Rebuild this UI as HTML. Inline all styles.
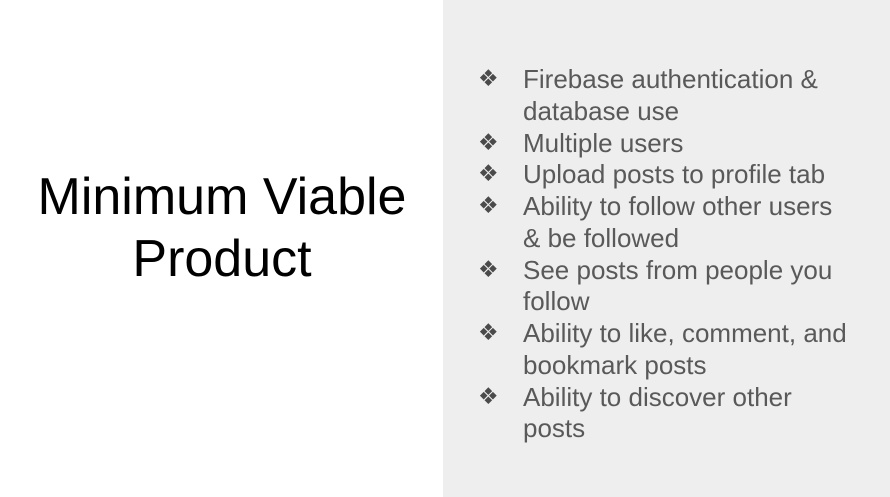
<!DOCTYPE html>
<html><head><meta charset="utf-8"><style>
html,body{margin:0;padding:0}
body{width:890px;height:497px;position:relative;background:#fff;font-family:"Liberation Sans",Arial,sans-serif;overflow:hidden}
.right{position:absolute;left:443px;top:0;width:447px;height:497px;background:#eeeeee}
.title{position:absolute;left:0;width:444px;top:166px;text-align:center;font-size:52px;line-height:62px;color:#000}
ul{position:absolute;left:478px;top:64px;margin:0;padding:0;list-style:none;color:#595959;font-size:26px;line-height:31.75px;width:420px;white-space:nowrap}
li{position:relative;padding-left:45px}
li:before{content:"❖";position:absolute;left:0;top:0;font-family:"DejaVu Sans",sans-serif;font-size:23px;color:#4a4a4a}
</style></head><body>
<div class="right"></div>
<div class="title">Minimum Viable<br>Product</div>
<ul>
<li>Firebase authentication &amp;<br>database use</li>
<li>Multiple users</li>
<li>Upload posts to profile tab</li>
<li>Ability to follow other users<br>&amp; be followed</li>
<li>See posts from people you<br>follow</li>
<li>Ability to like, comment, and<br>bookmark posts</li>
<li>Ability to discover other<br>posts</li>
</ul>
</body></html>
